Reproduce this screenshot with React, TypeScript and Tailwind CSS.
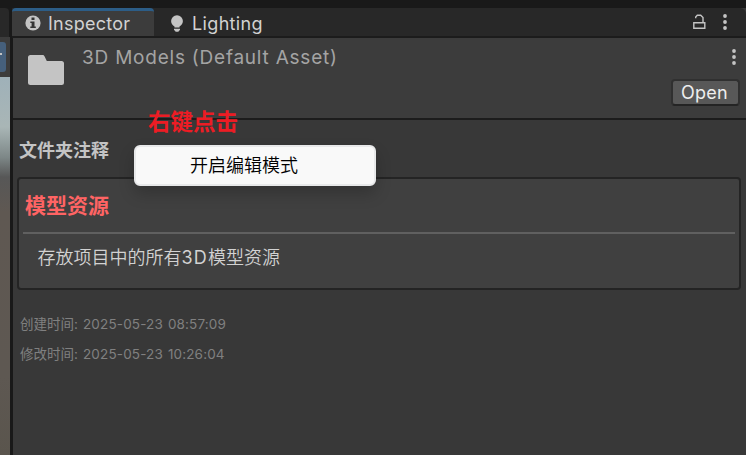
import React from 'react';

const cjk = "font-['Inter','Noto_Sans_CJK_SC',sans-serif]";

function Kebab({ className = '' }: { className?: string }) {
  return (
    <svg className={className} width="4" height="16" viewBox="0 0 4 16" fill="#c4c4c4">
      <circle cx="2" cy="2" r="1.9" />
      <circle cx="2" cy="8" r="1.9" />
      <circle cx="2" cy="14" r="1.9" />
    </svg>
  );
}

function TabBar() {
  return (
    <div className="flex h-[30px] shrink-0 border-b-2 border-[#1c1c1c] rounded-tr-md bg-[#282828] -ml-px">
      <div className="flex w-[142px] shrink-0 items-start rounded-t-[4px] border-t-[3px] border-[#2c5d87] bg-[#3c3c3c] pl-[13px]">
        <svg className="mt-1 shrink-0" width="16" height="16" viewBox="0 0 16 16">
          <circle cx="8" cy="8" r="7.6" fill="#c4c4c4" />
          <path d="M6.5 2.5h3v2.5h-3zM5.3 6.4h4.2v5h1.3V13H5.3v-1.6h1.3V8H5.3z" fill="#333" />
        </svg>
        <span className="ml-[7px] mt-[-1px] whitespace-nowrap text-[18px] leading-[27px] tracking-[0.25px] text-[#d2d2d2]">Inspector</span>
      </div>
      <div className="flex items-start pl-[17px]">
        <svg className="mt-[7px] shrink-0" width="12" height="18" viewBox="0 0 12 18" fill="#c4c4c4">
          <path d="M6 .2a5.900 5.900 0 0 0-5.900 5.900c0 2.500 1.500 4.500 3.400 5.400v1h5v-1c1.900-.9 3.400-2.900 3.400-5.400A5.900 5.900 0 0 0 6 .2z" />
          <path d="M3 13.8h6v1L7.3 16.8H4.7L3 14.8z" />
        </svg>
        <span className="ml-[9px] mt-[2px] whitespace-nowrap text-[18px] leading-[27px] tracking-[0.35px] text-[#d2d2d2]">Lighting</span>
      </div>
      <div className="ml-auto flex pr-[19px]">
        <svg className="mt-[6px]" width="13" height="16" viewBox="0 0 13 16" fill="none" stroke="#c4c4c4" strokeWidth="1.4">
          <path d="M.8 8.7h11v5.5H.8z" />
          <path d="M2.7 4.2V3L4.3 1.2h3.4l2.3 2.3v5" />
        </svg>
        <Kebab className="ml-[17px] mt-[6px]" />
      </div>
    </div>
  );
}

function AssetHeader() {
  return (
    <div className="flex h-[82px] shrink-0 border-b-2 border-[#1c1c1c] bg-[#3c3c3c] pl-[15px]">
      <svg className="mt-[17px] shrink-0" width="36" height="30" viewBox="0 0 36 30" fill="#c4c4c4">
        <path d="M2.5 0h12c1 0 1.5.4 2 1.3L18.8 6H33.5A2.5 2.5 0 0 1 36 8.5v19A2.5 2.5 0 0 1 33.5 30h-31A2.5 2.5 0 0 1 0 27.5v-25A2.5 2.5 0 0 1 2.5 0z" />
      </svg>
      <span className="ml-[18px] mt-[6px] whitespace-nowrap text-[19px] leading-[28px] tracking-[0.78px] text-[#a4a4a4]">3D Models (Default Asset)</span>
      <div className="ml-auto flex flex-col items-end pr-[6px]">
        <Kebab className="mr-[4px] mt-[11px]" />
        <button className="mt-[14px] h-[27px] w-[69px] rounded-[4px] border-2 border-[#303030] border-b-[#242424] bg-[#585858] pr-[2px] text-[18px] leading-[23px] tracking-[0.3px] text-[#eeeeee]">Open</button>
      </div>
    </div>
  );
}

function ContextMenu() {
  return (
    <>
      <div className="absolute left-[148px] top-[107px] whitespace-nowrap text-[22.5px] font-bold leading-[30px] text-[#ed1c24]">右键点击</div>
      <div className="absolute left-[134px] top-[145px] h-[41px] w-[242px] rounded-[6px] border-2 border-[#e8e9ea] bg-[#f9f9f9] pl-[54px] text-[18px] font-[350] leading-[37px] text-black shadow-[0_8px_16px_rgba(0,0,0,0.2)]">开启编辑模式</div>
    </>
  );
}

export default function App() {
  return (
    <div className={`relative flex h-[455px] w-[746px] flex-col overflow-hidden bg-[#191919] pt-2 ${cjk}`}>
      <div className="flex min-h-0 flex-1">
        <aside className="flex w-[10px] shrink-0 flex-col">
          <div className="h-[29px] w-[9px] rounded-tr-[4px] bg-[#282828]" />
          <div className="h-[40px] bg-[#3c3c3c] pt-[5px]">
            <div className="flex h-[30px] w-[6px] items-start rounded-r-[3px] bg-[#46607c] pt-[11px]">
              <div className="h-[2px] w-[2px] bg-[#c4c4c4]" />
            </div>
          </div>
          <div className="flex-1 bg-[linear-gradient(180deg,#9fb1b9_0px,#a9b6b6_50px,#7e8888_80px,#575757_100px,#5f5852_135px,#5e5852_300px,#5a554d_378px)]" />
        </aside>
        <main className="ml-[3px] flex min-w-0 flex-1 flex-col bg-[#383838]">
          <TabBar />
          <AssetHeader />
          <section className="flex flex-col pl-1 pr-[5px]">
            <h2 className="mt-[16px] pl-[2px] text-[18px] font-bold leading-[30px] text-[#c4c4c4]">文件夹注释</h2>
            <div className="mt-[11px] h-[113px] rounded-[4px] border-2 border-[#242424] bg-[#404040] px-1">
              <h3 className="h-[55px] border-b-2 border-[#606060] pl-[2px] pt-[12px] text-[21px] font-bold leading-[30px] text-[#ff6464]">模型资源</h3>
              <p className="pl-[14.5px] pt-[9px] text-[18px] leading-[30px] text-[#d2d2d2]"><span className="font-[350]">存放项目中的所有</span><span className="tracking-[1.2px]">3D</span><span className="font-[350]">模型资源</span></p>
            </div>
            <div className="mt-[19px] pl-[3px] text-[13.5px] leading-[30px] text-[#808080]">
              <p>创建时间<span className="tracking-[0.15px] [word-spacing:1px]">: 2025-05-23 08:57:09</span></p>
              <p>修改时间<span className="tracking-[0.15px] [word-spacing:1px]">: 2025-05-23 10:26:04</span></p>
            </div>
          </section>
        </main>
      </div>
      <ContextMenu />
    </div>
  );
}
